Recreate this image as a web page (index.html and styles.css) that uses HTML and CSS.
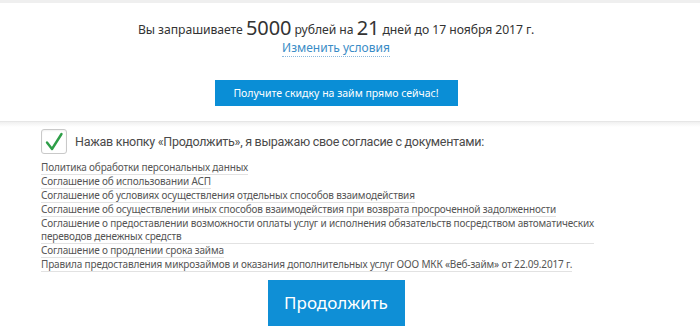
FILE: index.html
```html
<!DOCTYPE html>
<html lang="ru">
<head>
<meta charset="utf-8">
<link rel="stylesheet" href="styles.css">
</head>
<body>
<div class="topline"></div>
<div class="page">
  <section class="summary">
    <p class="request">Вы запрашиваете <span class="big">5000</span> рублей на <span class="big">21</span> дней до 17 ноября 2017 г.</p>
    <a class="change" href="#">Изменить условия</a>
    <a class="discount" href="#">Получите скидку на займ прямо сейчас!</a>
  </section>
</div>
<div class="divider"></div>
<div class="page">
  <section class="agree">
    <div class="agree-row">
      <span class="check">
        <svg width="20" height="20" viewBox="0 0 20 20"><path d="M3 10.5 L8 17 L17.5 2" fill="none" stroke="#2e9e48" stroke-width="2.4" stroke-linecap="round" stroke-linejoin="round"/></svg>
      </span>
      <span class="agree-text">Нажав кнопку «Продолжить», я выражаю свое согласие с документами:</span>
    </div>
    <ul class="docs">
      <li><a href="#">Политика обработки персональных данных</a></li>
      <li><a href="#">Соглашение об использовании АСП</a></li>
      <li><a href="#">Соглашение об условиях осуществления отдельных способов взаимодействия</a></li>
      <li><a href="#">Соглашение об осуществлении иных способов взаимодействия при возврата просроченной задолженности</a></li>
      <li><a href="#">Соглашение о предоставлении возможности оплаты услуг и исполнения обязательств посредством автоматических<br>переводов денежных средств</a></li>
      <li><a href="#">Соглашение о продлении срока займа</a></li>
      <li><a href="#">Правила предоставления микрозаймов и оказания дополнительных услуг ООО МКК «Веб-займ» от 22.09.2017 г.</a></li>
    </ul>
    <div class="submit-wrap"><a class="submit" href="#">Продолжить</a></div>
  </section>
</div>
</body>
</html>
```
FILE: styles.css
```css
html, body { margin: 0; padding: 0; background: #fff; }
body { font-family: "Noto Sans", "Open Sans", sans-serif; color: #333; }
a { text-decoration: none; }
.topline { height: 3px; background: #efefef; }
.page { width: 672px; }
.summary { display: flex; flex-direction: column; align-items: center; padding-top: 13px; }
.request { margin: 0; font-size: 12.2px; line-height: 24px; color: #333; letter-spacing: -0.05px; }
.request .big { font-size: 20px; vertical-align: -1px; }
.change { margin-top: -2px; font-size: 12px; line-height: 16px; color: #3a8cc6; border-bottom: 1px dotted #8bb9dc; }
.discount { margin-top: 23px; width: 243px; height: 26px; line-height: 26px; text-align: center; background: #0a8ed6; color: #fff; font-size: 10.5px; }
.divider { margin-top: 15px; height: 5px; border-top: 1px solid #e6e6e6; background: linear-gradient(#f0f0f0, #fff); }
.agree { padding: 2px 0 0 41px; }
.agree-row { display: flex; align-items: center; gap: 8px; }
.check { width: 24px; height: 23px; border: 1px solid #c9c9c9; border-radius: 3px; display: flex; align-items: center; justify-content: center; box-shadow: inset 0 1px 2px rgba(0,0,0,.06); }
.agree-text { font-family: Roboto, sans-serif; font-size: 12.5px; color: #4a4a4a; letter-spacing: -0.28px; }
.docs { list-style: none; margin: 7px 0 0; padding: 0; }
.docs li { font-size: 10px; line-height: 13px; letter-spacing: -0.16px; }
.docs a { display: inline-block; color: #555; border-bottom: 1px solid #e2e2e2; }
.submit-wrap { display: flex; padding-right: 41px; justify-content: center; margin-top: 8px; }
.submit { width: 137px; height: 46px; line-height: 46px; text-align: center; background: #0f8fd6; color: #fff; font-size: 17px; }
```
